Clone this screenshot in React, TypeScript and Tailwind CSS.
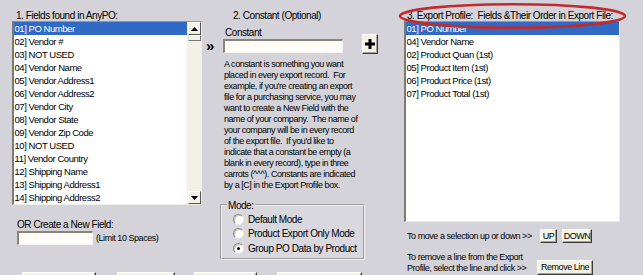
import React from "react";

const fields = [
  "01] PO Number",
  "02] Vendor #",
  "03] NOT USED",
  "04] Vendor Name",
  "05] Vendor Address1",
  "06] Vendor Address2",
  "07] Vendor City",
  "08] Vendor State",
  "09] Vendor Zip Code",
  "10] NOT USED",
  "11] Vendor Country",
  "12] Shipping Name",
  "13] Shipping Address1",
  "14] Shipping Address2",
];

const profile = [
  "01] PO Number",
  "04] Vendor Name",
  "02] Product Quan (1st)",
  "05] Product Item (1st)",
  "06] Product Price (1st)",
  "07] Product Total (1st)",
];

const note = [
  "A constant is something you want",
  "placed in every export record.  For",
  "example, if you're creating an export",
  "file for a purchasing service, you may",
  "want to create a New Field with the",
  "name of your company.  The name of",
  "your company will be in every record",
  "of the export file.  If you'd like to",
  "indicate that a constant be empty (a",
  "blank in every record), type in three",
  "carrots (^^^). Constants are indicated",
  "by a [C] in the Export Profile box.",
];

const modes = [
  { label: "Default Mode", on: false },
  { label: "Product Export Only Mode", on: false },
  { label: "Group PO Data by Product", on: true },
];

// 古い Windows 風のボタン
function WinButton({ children, className = "" }: { children?: React.ReactNode; className?: string }) {
  return (
    <button
      className={`flex items-center justify-center shrink-0 bg-[#f4f2e4] border border-t-white border-l-white border-r-[#3a3a3a] border-b-[#3a3a3a] shadow-[inset_-1px_-1px_0_#a8a597] text-[9px] leading-none text-black whitespace-nowrap ${className}`}
    >
      {children}
    </button>
  );
}

function ArrowBox({ up }: { up?: boolean }) {
  return (
    <div className="w-[13px] h-[13px] bg-[#f4f2e6] border border-t-white border-l-white border-r-[#555] border-b-[#555] flex items-center justify-center">
      <svg width="7" height="4" viewBox="0 0 7 4">
        {up ? <polygon points="3.5,0 7,4 0,4" fill="#000" /> : <polygon points="0,0 7,0 3.5,4" fill="#000" />}
      </svg>
    </div>
  );
}

function Radio({ on }: { on: boolean }) {
  return (
    <span className="w-[11px] h-[11px] shrink-0 rounded-full bg-white border border-t-[#8a887c] border-l-[#8a887c] border-r-[#e8e8e8] border-b-[#e8e8e8] shadow-[inset_1px_1px_0_#c8c6bc] flex items-center justify-center">
      {on && <span className="w-[3px] h-[3px] rounded-full bg-black" />}
    </span>
  );
}

export default function App() {
  return (
    <div className="relative w-[643px] h-[275px] overflow-hidden bg-[#d4d3d9] text-black font-['Liberation_Sans',Arial,sans-serif] tracking-[-0.45px] flex">
      {/* 左 + 中央 */}
      <div className="flex flex-col pl-[12px]">
        <div className="flex h-[272px] shrink-0">
          {/* 1. Fields */}
          <div className="w-[190px] flex flex-col">
            <div className="pl-[4px] pt-[8.5px] text-[10px] leading-[13px]">1. Fields found in AnyPO:</div>
            <div className="mt-[-0.5px] h-[184px] shrink-0 flex bg-white border-l-2 border-t border-r border-b border-l-[#7e7b6e] border-t-[#9a978a] border-r-[#f0efea] border-b-[#f0efea] overflow-hidden">
              <div className="flex-1 flex flex-col">
                {fields.map((f, i) => (
                  <div
                    key={f}
                    className={`h-[13px] shrink-0 pl-[0.5px] text-[9.5px] leading-[13px] whitespace-nowrap ${i === 0 ? "bg-[#316ac5] text-white" : ""}`}
                  >
                    {f}
                  </div>
                ))}
              </div>
              <div className="w-[14px] bg-[#f3f1e7] flex flex-col items-center">
                <ArrowBox up />
                <div className="w-[13px] h-[6px] bg-[#f4f2e6] border border-t-white border-l-[#e0ded2] border-r-[#777] border-b-[#777]" />
                <div className="flex-1" />
                <ArrowBox />
              </div>
            </div>
            <div className="pl-[5px] mt-[13px] text-[10px] leading-[13px]">OR Create a New Field:</div>
            <div className="pl-[5px] flex items-center">
              <div className="w-[76px] h-[14px] bg-[#fdfcf6] border-l-2 border-t-2 border-r border-b border-l-[#8a8676] border-t-[#8a8676] border-r-[#f4f3ee] border-b-[#f4f3ee]" />
              <span className="ml-[3px] text-[9px] leading-[13px]">(Limit 10 Spaces)</span>
            </div>
          </div>

          {/* >> */}
          <div className="w-[18px] pt-[38px] pl-[4px] text-[15px] font-bold leading-[16px] tracking-normal">»</div>

          {/* 2. Constant */}
          <div className="w-[184px] flex flex-col">
            <div className="pl-[13px] pt-[8.5px] text-[10px] leading-[13px]">2. Constant (Optional)</div>
            <div className="flex items-end">
              <div className="flex flex-col">
                <div className="pl-[5px] mt-[4px] text-[10px] leading-[13px]">Constant</div>
                <div className="ml-[3px] w-[120px] h-[14.5px] bg-[#fdfcf6] border-l-2 border-t-2 border-r border-b border-l-[#8a8676] border-t-[#8a8676] border-r-[#f4f3ee] border-b-[#f4f3ee]" />
              </div>
              <WinButton className="ml-[19px] mb-[-1px] w-[16px] h-[20px]">
                <svg width="10" height="10" viewBox="0 0 10 10">
                  <rect x="3.5" y="0" width="3" height="10" fill="#000" />
                  <rect x="0" y="3.5" width="10" height="3" fill="#000" />
                </svg>
              </WinButton>
            </div>
            <div className="pl-[4px] mt-[5.5px] text-[9px] leading-[11px]">
              {note.map((l) => (
                <div key={l} className="whitespace-pre">
                  {l}
                </div>
              ))}
            </div>
            <fieldset className="mt-[8px] w-[145px] h-[61px] bg-[#d9d8de] border-2 [border-style:groove] border-[#f2f2f4]">
              <legend className="ml-[5px] px-[1px] text-[10px] leading-[13px]">Mode:</legend>
              <div className="flex flex-col pl-[11px] mt-[0.5px]">
                {modes.map((m) => (
                  <div key={m.label} className="h-[14.5px] flex items-center gap-[4px] text-[10px] whitespace-nowrap">
                    <Radio on={m.on} />
                    <span>{m.label}</span>
                  </div>
                ))}
              </div>
            </fieldset>
          </div>
        </div>

        {/* 下のボタン列（途中で切れている） */}
        <div className="flex h-[20px] shrink-0">
          <WinButton className="ml-[10px] w-[74px] h-[20px]" />
          <WinButton className="ml-[21px] w-[58px] h-[20px]" />
          <WinButton className="ml-[19px] w-[63px] h-[20px]" />
          <WinButton className="ml-[20px] w-[85px] h-[20px]" />
        </div>
      </div>

      {/* 3. Export Profile */}
      <div className="w-[216px] flex flex-col">
        <div className="pl-[3px] pt-[8.5px] text-[10px] leading-[13px] whitespace-pre">3. Export Profile:  Fields &amp;Their Order in Export File:</div>
        <div className="mt-[-0.5px] h-[201px] shrink-0 bg-white border-l-2 border-t border-r border-b border-l-[#7e7b6e] border-t-[#9a978a] border-r-[#eceae2] border-b-[#eceae2] flex flex-col">
          {profile.map((p, i) => (
            <div
              key={p}
              className={`h-[13px] pl-[0.5px] text-[9.5px] leading-[13px] whitespace-nowrap ${i === 0 ? "bg-[#316ac5] text-white" : ""}`}
            >
              {p}
            </div>
          ))}
        </div>
        <div className="mt-[7px] pl-[3px] flex items-center h-[14px] shrink-0">
          <span className="w-[133px] text-[9px] leading-[13px] whitespace-nowrap">To move a selection up or down &gt;&gt;</span>
          <WinButton className="w-[17px] h-[14px]">UP</WinButton>
          <WinButton className="ml-[5px] w-[30px] h-[14px]">DOWN</WinButton>
        </div>
        <div className="mt-[8.5px] pl-[3px] flex items-end shrink-0">
          <div className="w-[130px] text-[9px] leading-[11px] whitespace-nowrap">
            <div>To remove a line from the Export</div>
            <div>Profile, select the line and click &gt;&gt;</div>
          </div>
          <WinButton className="w-[56px] h-[15px] mb-[-1.5px]">Remove Line</WinButton>
        </div>
      </div>

      {/* 赤い丸囲み */}
      <svg className="absolute left-[398px] top-[2px]" width="229" height="28" viewBox="0 0 229 28">
        <ellipse cx="114.5" cy="14" rx="112.5" ry="11.8" fill="none" stroke="#c22a2c" strokeWidth="2.6" />
      </svg>
    </div>
  );
}
